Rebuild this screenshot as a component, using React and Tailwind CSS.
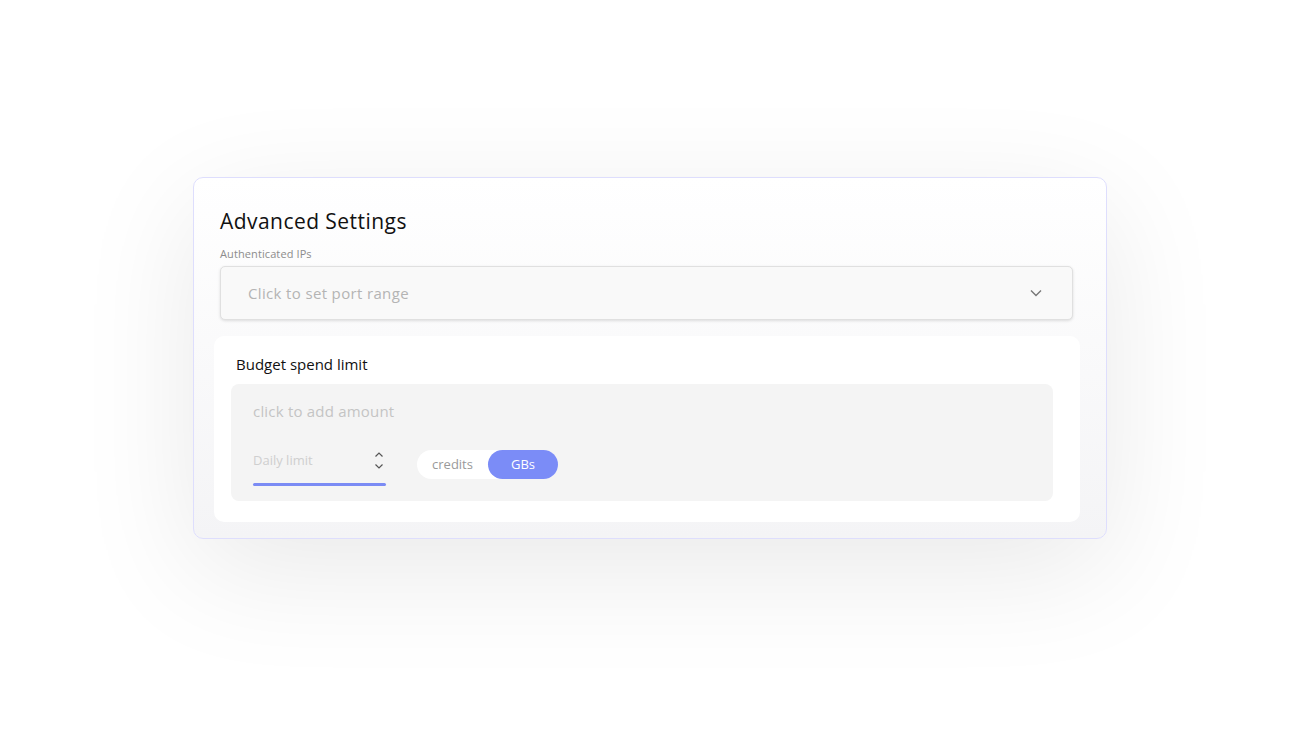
import React from "react";

export default function App() {
  return (
    <div
      className="w-[1298px] h-[745px] bg-white flex justify-center pt-[177px]"
      style={{ fontFamily: "'Open Sans', 'Liberation Sans', sans-serif" }}
    >
      <div className="ml-[2px] w-[914px] h-[362px] rounded-[10px] border border-[#dedefd] bg-gradient-to-b from-white to-[#f4f4f6] shadow-[0_30px_120px_rgba(0,0,0,0.09)] pl-[20px] pr-[26px] pt-[28px] flex flex-col">
        <h1 className="ml-[6px] text-[21px] leading-[30px] font-medium text-[#111] tracking-[0.45px]">
          Advanced Settings
        </h1>
        <div className="ml-[6px] mt-[11px] text-[11px] leading-[14px] text-[#8c8c8c] tracking-[0.1px]">
          Authenticated IPs
        </div>
        <div className="ml-[6px] mr-[7px] mt-[5px] h-[54px] rounded-[5px] border border-[#e0e0e0] bg-[#f9f9f9] shadow-[0_1px_3px_rgba(0,0,0,0.12)] flex items-center justify-between pl-[27px] pr-[30px]">
          <span className="text-[15px] text-[#b4b4b4] tracking-[0.35px]">Click to set port range</span>
          <svg width="12" height="8" viewBox="0 0 12 8" fill="none">
            <path d="M1 1.5 L6 6.5 L11 1.5" stroke="#777" strokeWidth="1.4" />
          </svg>
        </div>
        <div className="mt-[16px] h-[186px] rounded-[10px] bg-white pl-[17px] pr-[27px] pt-[16px] flex flex-col">
          <div className="ml-[5px] text-[15px] leading-[24px] text-[#111]">Budget spend limit</div>
          <div className="mt-[8px] h-[117px] rounded-[8px] bg-[#f4f4f4] px-[22px] pt-[16px] flex flex-col">
            <div className="text-[15px] leading-[22px] text-[#c4c4c4] tracking-[0.2px]">click to add amount</div>
            <div className="mt-[23px] flex items-end">
              <div className="w-[133px] flex flex-col">
                <div className="flex items-center justify-between pr-[2px]">
                  <span className="text-[13px] leading-[20px] text-[#cfcfcf] pt-[4px]">Daily limit</span>
                  <svg width="10" height="20" viewBox="0 0 10 20" fill="none" className="mt-[6px]">
                    <path d="M1.5 5.5 L5 2 L8.5 5.5" stroke="#555" strokeWidth="1.2" />
                    <path d="M1.5 13.5 L5 17 L8.5 13.5" stroke="#555" strokeWidth="1.2" />
                  </svg>
                </div>
                <div className="mt-[12px] h-[3px] bg-[#7b8bf4] rounded-full" />
              </div>
              <div className="ml-[31px] mb-[7px] h-[29px] rounded-full bg-white flex items-center">
                <span className="w-[71px] text-center text-[13px] text-[#9a9a9a]">credits</span>
                <span className="w-[70px] h-[29px] rounded-full bg-[#7b8cf7] text-white text-[13px] flex items-center justify-center">
                  GBs
                </span>
              </div>
            </div>
          </div>
        </div>
      </div>
    </div>
  );
}
